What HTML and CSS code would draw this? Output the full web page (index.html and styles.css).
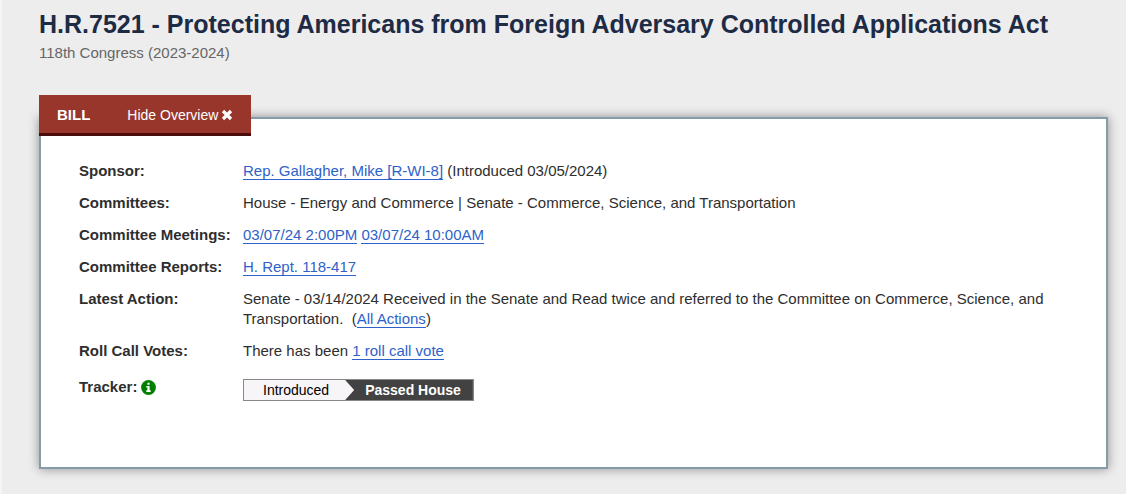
FILE: index.html
```html
<!DOCTYPE html>
<html lang="en">
<head>
<meta charset="utf-8">
<meta name="viewport" content="width=device-width, initial-scale=1">
<title>H.R.7521 - 118th Congress (2023-2024)</title>
<link rel="stylesheet" href="styles.css">
</head>
<body class="page">
<main class="bill">
  <header class="bill-header">
    <h1 class="bill-title">H.R.7521 - Protecting Americans from Foreign Adversary Controlled Applications Act</h1>
    <p class="bill-congress">118th Congress (2023-2024)</p>
  </header>
  <div class="tab">
    <strong class="tab-label">BILL</strong>
    <button class="tab-toggle" type="button">Hide Overview
      <svg class="icon-close" viewBox="0 0 12 12" aria-hidden="true"><path d="M2 2 10 10M10 2 2 10" fill="none" stroke="currentColor" stroke-width="3.2"/></svg>
    </button>
  </div>
  <section class="overview">
    <table class="facts">
      <tbody>
        <tr><th scope="row">Sponsor:</th><td><a href="#sponsor">Rep. Gallagher, Mike [R-WI-8]</a> (Introduced 03/05/2024)</td></tr>
        <tr><th scope="row">Committees:</th><td>House - Energy and Commerce | Senate - Commerce, Science, and Transportation</td></tr>
        <tr><th scope="row">Committee Meetings:</th><td><a href="#meeting-1">03/07/24 2:00PM</a> <a href="#meeting-2">03/07/24 10:00AM</a></td></tr>
        <tr><th scope="row">Committee Reports:</th><td><a href="#report">H. Rept. 118-417</a></td></tr>
        <tr><th scope="row">Latest Action:</th><td>Senate - 03/14/2024 Received in the Senate and Read twice and referred to the Committee on Commerce, Science, and Transportation. &nbsp;(<a href="#actions">All Actions</a>)</td></tr>
        <tr><th scope="row">Roll Call Votes:</th><td>There has been <a href="#votes">1 roll call vote</a></td></tr>
        <tr class="tracker-row">
          <th scope="row"><span class="tracker-label">Tracker:
            <svg class="icon-info" viewBox="0 0 15 15" role="img" aria-label="Tracker information"><circle cx="7.5" cy="7.5" r="7.4" fill="#008000"/><path d="M6.4 2.8h2.2v2H6.4zM5.3 6h3.3v4.3h1.1v1.6H5.3v-1.6h1.1V7.5H5.3z" fill="#fff"/></svg></span></th>
          <td>
            <ol class="tracker">
              <li class="step">Introduced</li>
              <li class="step step-current">Passed House</li>
            </ol>
          </td>
        </tr>
      </tbody>
    </table>
  </section>
</main>
</body>
</html>
```

FILE: styles.css
```css
* { box-sizing: border-box; }

.page {
  margin: 0;
  min-height: 100vh;
  border-left: 2px solid #f5f5f5;
  background: #ededed;
  color: #2e2e2e;
  font: 15px/20px "Liberation Sans", Arial, sans-serif;
}

.bill { padding: 8px 18px 24px 37px; }

.bill-title {
  margin: 0;
  color: #1d2b45;
  font-size: 25px;
  line-height: 32px;
}

.bill-congress {
  margin: 3px 0 0;
  color: #666;
}

.tab {
  position: relative;
  display: flex;
  align-items: center;
  gap: 37px;
  width: max-content;
  height: 41px;
  margin-top: 32px;
  padding: 2px 18px 0;
  border-bottom: 3px solid #4b0d0b;
  background: #98362b;
  color: #fff;
}

.tab-toggle {
  display: flex;
  align-items: center;
  gap: 3px;
  padding: 0;
  border: 0;
  background: none;
  color: inherit;
  font: 14px/20px "Liberation Sans", Arial, sans-serif;
  cursor: pointer;
}

.icon-close {
  width: 12px;
  height: 12px;
}

.overview {
  margin-top: -19px;
  padding: 36px 38px 60px;
  border: 2px solid #869ba8;
  background: #fff;
  box-shadow: 0 0 10px rgba(0, 0, 0, 0.4);
}

.facts {
  width: 100%;
  border-collapse: collapse;
}

.facts th,
.facts td {
  padding: 6px 0;
  text-align: left;
  vertical-align: top;
}

.facts th {
  width: 164px;
  white-space: nowrap;
}

.facts a {
  border-bottom: 1px solid #2e62c9;
  color: #2e62c9;
  text-decoration: none;
}

.tracker-row th { padding-top: 10px; }

.tracker-row td { padding-top: 12px; }

.tracker-label {
  display: flex;
  align-items: center;
  gap: 4px;
}

.icon-info {
  width: 15px;
  height: 15px;
}

.tracker {
  display: flex;
  width: max-content;
  margin: 0;
  padding: 0;
  border: 1px solid #888;
  background: #f7f5f7;
  color: #000;
  font-size: 14px;
  list-style: none;
}

.step { padding: 0 16px 0 19px; }

.step-current {
  padding: 0 12px 0 20px;
  background: #424242;
  clip-path: polygon(0 0, 100% 0, 100% 100%, 0 100%, 9px 50%);
  color: #fff;
  font-weight: bold;
}
```
